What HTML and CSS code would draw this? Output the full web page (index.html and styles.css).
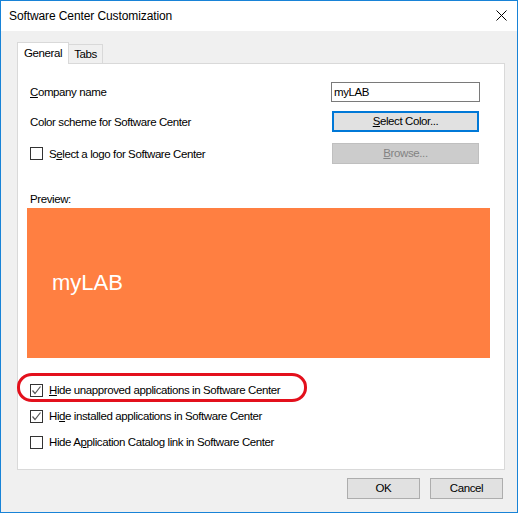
FILE: index.html
```html
<!DOCTYPE html>
<html>
<head>
    <link rel="stylesheet" href="styles.css">
</head>
<body>
  <div class="window">
    <div class="titlebar">
      <span class="title">Software Center Customization</span>
      <svg class="close" width="11" height="11" viewBox="0 0 11 11">
        <path d="M0.5 0.5 L10.5 10.5 M10.5 0.5 L0.5 10.5" stroke="#000" stroke-width="1" fill="none"/>
      </svg>
    </div>
    <div class="content">
      <div class="tabs">
        <div class="tab active">General</div>
        <div class="tab">Tabs</div>
      </div>
      <div class="panel">
        <div class="row first">
          <span><u>C</u>ompany name</span>
          <input class="textbox" type="text" value="myLAB">
        </div>
        <div class="row">
          <span>Color scheme for Software Center</span>
          <div class="btn focused"><u>S</u>elect Color...</div>
        </div>
        <div class="row">
          <span class="check-label"><span class="checkbox"></span>S<u>e</u>lect a logo for Software Center</span>
          <div class="btn disabled"><u>B</u>rowse...</div>
        </div>
        <div class="preview-label">Preview:</div>
        <div class="preview">myLAB</div>
        <div class="check-list">
          <div class="check-row">
            <span class="checkbox checked">
              <svg width="11" height="11" viewBox="0 0 11 11"><path d="M1.5 5.5 L4 8.5 L9.5 1.5" stroke="#555" stroke-width="1.2" fill="none"/></svg>
            </span>
            <span><u>H</u>ide unapproved applications in Software Center</span>
          </div>
          <div class="check-row">
            <span class="checkbox checked">
              <svg width="11" height="11" viewBox="0 0 11 11"><path d="M1.5 5.5 L4 8.5 L9.5 1.5" stroke="#555" stroke-width="1.2" fill="none"/></svg>
            </span>
            <span>Hi<u>d</u>e installed applications in Software Center</span>
          </div>
          <div class="check-row">
            <span class="checkbox"></span>
            <span>Hide A<u>p</u>plication Catalog link in Software Center</span>
          </div>
        </div>
        <!-- red annotation round the first option -->
        <div class="highlight"></div>
      </div>
      <div class="actions">
        <div class="btn small">OK</div>
        <div class="btn small">Cancel</div>
      </div>
    </div>
  </div>
</body>
</html>
```

FILE: styles.css
```css
/* dialog window */
body {
    margin: 0;
    font-family: "Liberation Sans", Arial, sans-serif;
    font-size: 11.5px;
    letter-spacing: -0.4px;
    color: #000;
}

.window {
    width: 518px;
    height: 513px;
    box-sizing: border-box;
    border: 1px solid #1883d7;
    background-color: #f0f0f0;
    display: flex;
    flex-direction: column;
}

.titlebar {
    height: 30px;
    background-color: #fff;
    display: flex;
    justify-content: space-between;
    align-items: flex-start;
}

.title {
    line-height: 30px;
    padding-left: 8px;
    font-size: 12px;
    letter-spacing: -0.1px;
}

.close {
    margin-top: 9px;
    margin-right: 10px;
}

.content {
    padding: 12px 12px 0 16px;
}

/* tab strip */
.tabs {
    display: flex;
    align-items: flex-end;
    height: 20px;
}

.tab {
    border: 1px solid #d9d9d9;
    border-bottom: none;
    padding: 0 5px;
    height: 18px;
    line-height: 18px;
}

.tab.active {
    background-color: #fff;
    height: 21px;
    line-height: 20px;
    margin-bottom: -1px;
    padding: 0 6px;
    position: relative;
    z-index: 1;
}

.tab + .tab {
    border-left: none;
}

/* tab page */
.panel {
    position: relative;
    height: 405px;
    border: 1px solid #d9d9d9;
    background-color: #fff;
    padding: 0 24px 0 12px;
}

.row {
    display: flex;
    justify-content: space-between;
    align-items: center;
    height: 21px;
    margin-top: 9px;
}

.row.first {
    margin-top: 18px;
    height: 20px;
}

.row + .row + .row {
    margin-top: 11px;
}

.textbox {
    width: 149px;
    height: 20px;
    box-sizing: border-box;
    border: 1px solid #7a7a7a;
    padding: 0 2px;
    font-family: "Liberation Sans", Arial, sans-serif;
    font-size: 11.5px;
    letter-spacing: -0.4px;
    outline: none;
}

.btn {
    box-sizing: border-box;
    width: 147px;
    height: 21px;
    margin-right: 1px;
    border: 1px solid #adadad;
    background-color: #e1e1e1;
    text-align: center;
    line-height: 19px;
}

.btn.focused {
    border: 2px solid #0078d7;
    line-height: 17px;
}

.btn.disabled {
    background-color: #cccccc;
    border-color: #bfbfbf;
    color: #838383;
}

.check-label {
    display: flex;
    align-items: center;
}

.checkbox {
    width: 13px;
    height: 13px;
    box-sizing: border-box;
    border: 1px solid #333;
    background-color: #fff;
    margin-right: 6px;
    display: inline-flex;
    align-items: center;
    justify-content: center;
}

.checkbox svg {
    display: block;
}

.preview-label {
    margin-top: 27px;
    line-height: 16px;
}

.preview {
    margin: 1px 0 0 -3px;
    width: 463px;
    height: 150px;
    box-sizing: border-box;
    padding-left: 25px;
    background-color: #ff7f41;
    color: #fff;
    font-size: 22px;
    letter-spacing: 0;
    display: flex;
    align-items: center;
}

.check-list {
    margin-top: 19px;
}

.check-row {
    height: 26px;
    display: flex;
    align-items: center;
}

.highlight {
    position: absolute;
    left: -1px;
    top: 309px;
    width: 290px;
    height: 29px;
    box-sizing: border-box;
    border: 3px solid #e3101c;
    border-radius: 15px / 14px;
}

/* OK / Cancel */
.actions {
    display: flex;
    justify-content: flex-end;
    gap: 10px;
    margin-top: 8px;
    padding-right: 2px;
}

.btn.small {
    width: 73px;
    margin-right: 0;
}
```
